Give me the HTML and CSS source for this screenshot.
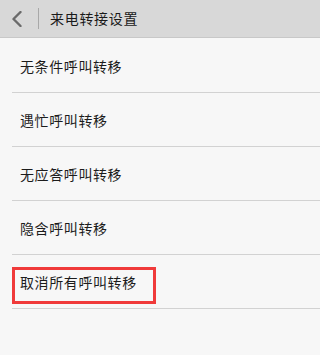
FILE: index.html
```html
<!DOCTYPE html>
<html lang="zh-CN">
<head>
<meta charset="utf-8">
<link rel="stylesheet" href="styles.css">
</head>
<body>
<div class="page">
  <header class="bar">
    <span class="back">
      <svg width="12" height="16" viewBox="0 0 12 16"><path d="M9.5 1 L2.5 8 L9.5 15" fill="none" stroke="#6a6a6a" stroke-width="2.4" stroke-linecap="round" stroke-linejoin="round"/></svg>
    </span>
    <span class="divider"></span>
    <span class="title">来电转接设置</span>
  </header>
  <ul class="list">
    <li class="row"><span class="label">无条件呼叫转移</span></li>
    <li class="row"><span class="label">遇忙呼叫转移</span></li>
    <li class="row"><span class="label">无应答呼叫转移</span></li>
    <li class="row"><span class="label">隐含呼叫转移</span></li>
    <li class="row row-marked"><span class="mark"><span class="label">取消所有呼叫转移</span></span></li>
  </ul>
</div>
</body>
</html>
```
FILE: styles.css
```css
html, body {
  margin: 0;
  padding: 0;
  background: #f7f7f7;
}
body {
  font-family: "Noto Sans CJK SC", "Noto Sans", sans-serif;
  color: #1c1c1c;
}
.page {
  min-height: 355px;
  background: #f7f7f7;
}
.bar {
  height: 37px;
  background: #d8d8d8;
  border-bottom: 1px solid #c8c8c8;
  display: flex;
  align-items: center;
}
.back {
  width: 38px;
  display: flex;
  justify-content: center;
  padding-right: 2px;
  box-sizing: border-box;
}
.back svg {
  display: block;
  margin-left: -2px;
}
.divider {
  width: 1px;
  height: 21px;
  background: #a8a8a8;
}
.title {
  margin-left: 11px;
  font-size: 14px;
  letter-spacing: 0.7px;
  color: #1a1a1a;
  line-height: 1;
  padding-bottom: 1px;
}
.list {
  list-style: none;
  margin: 0;
  padding: 1px 0 0 12px;
}
.row {
  height: 53px;
  border-bottom: 1px solid #d2d2d2;
  display: flex;
  align-items: center;
  padding-left: 8px;
}
.label {
  font-size: 14px;
  letter-spacing: 0.6px;
  line-height: 1;
}
.row-marked {
  padding-left: 0;
  align-items: flex-start;
}
.mark {
  margin-top: 12px;
  width: 144px;
  height: 37px;
  box-sizing: border-box;
  border: 3px solid #f03a3a;
  display: flex;
  align-items: center;
  padding: 0 0 7px 5px;
}
```
